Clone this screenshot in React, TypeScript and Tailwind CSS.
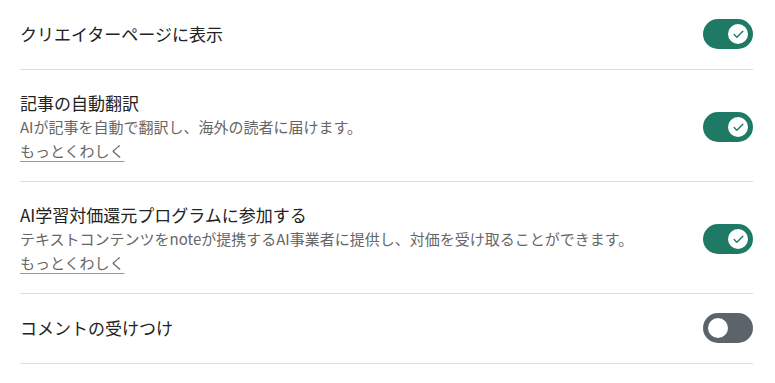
import { Check } from "lucide-react";

type Row = {
  title: string;
  desc?: string;
  link?: boolean;
  on: boolean;
};

const rows: Row[] = [
  { title: "クリエイターページに表示", on: true },
  {
    title: "記事の自動翻訳",
    desc: "AIが記事を自動で翻訳し、海外の読者に届けます。",
    link: true,
    on: true,
  },
  {
    title: "AI学習対価還元プログラムに参加する",
    desc: "テキストコンテンツをnoteが提携するAI事業者に提供し、対価を受け取ることができます。",
    link: true,
    on: true,
  },
  { title: "コメントの受けつけ", on: false },
];

function Toggle({ on }: { on: boolean }) {
  return (
    <div
      className={`w-[50px] h-[30px] rounded-full flex items-center px-[5px] shrink-0 ${
        on ? "bg-[#1f7a65] justify-end" : "bg-[#5c646a] justify-start"
      }`}
    >
      <div className="w-[20px] h-[20px] rounded-full bg-white flex items-center justify-center">
        {on && <Check size={13} strokeWidth={2.6} className="text-[#1f7a65]" />}
      </div>
    </div>
  );
}

export default function App() {
  return (
    <div
      className="bg-white w-[775px] h-[383px] overflow-hidden"
      style={{ fontFamily: '"Noto Sans CJK JP", "Noto Sans", sans-serif' }}
    >
      <div className="ml-5 w-[733px]">
        {rows.map((row) => (
          <div
            key={row.title}
            className={`flex items-center justify-between border-b border-[#dddddd] ${
              row.link ? "pt-[21px] pb-[18px]" : "pt-[19px] pb-[20px]"
            }`}
          >
            <div>
              <p className="text-[17px] leading-6 text-[#222222]">{row.title}</p>
              {row.desc && (
                <p className="text-[15px] leading-6 text-[#666666]">{row.desc}</p>
              )}
              {row.link && (
                <a className="block text-[15px] leading-6 text-[#666666] underline underline-offset-[4px] decoration-[#999999]">
                  もっとくわしく
                </a>
              )}
            </div>
            <Toggle on={row.on} />
          </div>
        ))}
      </div>
    </div>
  );
}
